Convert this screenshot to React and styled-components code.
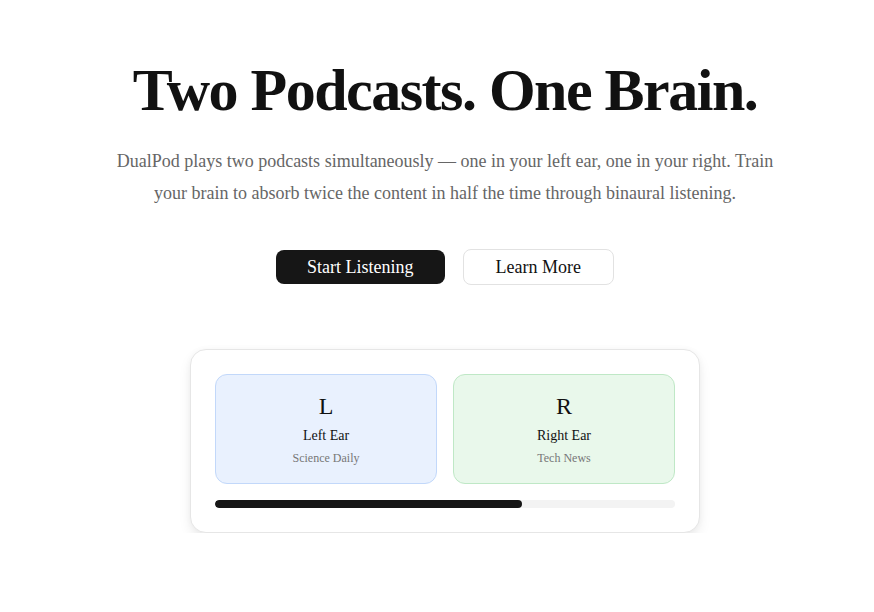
import React from 'react';
import styled, { createGlobalStyle } from 'styled-components';

const GlobalStyle = createGlobalStyle`
  * { box-sizing: border-box; }
  body {
    margin: 0;
    background: #fff;
    font-family: "Liberation Serif", "Times New Roman", serif;
    color: #111;
  }
`;

const Hero = styled.section`
  display: flex;
  flex-direction: column;
  align-items: center;
  padding: 60px 8px 0 24px;
  text-align: center;
`;

const Title = styled.h1`
  margin: 0;
  font-size: 60px;
  font-weight: 700;
  line-height: 1;
  letter-spacing: -0.025em;
  color: #111;
`;

const Lead = styled.p`
  margin: 25px 0 0;
  max-width: 680px;
  font-size: 18px;
  line-height: 32px;
  color: #666;
`;

const Actions = styled.div`
  display: flex;
  align-items: center;
  gap: 18px;
  margin-top: 40px;
`;

const Button = styled.button`
  font-family: inherit;
  font-size: 18px;
  line-height: 20px;
  padding: 7px 32px;
  border-radius: 8px;
  cursor: pointer;
  border: 1px solid #e2e2e2;
  background: #fff;
  color: #111;
`;

const PrimaryButton = styled(Button)`
  padding: 7px 31px;
  border: 0;
  background: #161616;
  color: #fff;
`;

const Card = styled.div`
  margin-top: 64px;
  width: 510px;
  padding: 24px;
  background: #fff;
  border: 1px solid #e6e6e6;
  border-radius: 16px;
  box-shadow: 0 6px 14px -2px rgba(0, 0, 0, 0.1), 0 0 6px rgba(0, 0, 0, 0.03);
`;

const Ears = styled.div`
  display: grid;
  grid-template-columns: 1fr 1fr;
  gap: 16px;
`;

const Ear = styled.div`
  height: 110px;
  display: flex;
  flex-direction: column;
  align-items: center;
  justify-content: center;
  border-radius: 12px;
  background: ${p => p.$bg};
  border: 1px solid ${p => p.$border};
`;

const Letter = styled.div`
  font-size: 24px;
  line-height: 28px;
  color: #111;
`;

const EarName = styled.div`
  margin-top: 7px;
  font-size: 14px;
  line-height: 18px;
  color: #111;
`;

const Show = styled.div`
  margin-top: 5px;
  font-size: 12px;
  line-height: 16px;
  color: #777;
`;

const Track = styled.div`
  margin-top: 16px;
  height: 8px;
  border-radius: 4px;
  background: #f3f3f3;
  overflow: hidden;
`;

const Fill = styled.div`
  height: 100%;
  border-radius: 4px;
  background: #161616;
`;

export default function App() {
  const progress = 66.7;
  return (
    <>
      <GlobalStyle />
      <Hero>
        <Title>Two Podcasts. One Brain.</Title>
        <Lead>
          DualPod plays two podcasts simultaneously — one in your left ear, one in your right. Train
          your brain to absorb twice the content in half the time through binaural listening.
        </Lead>
        <Actions>
          <PrimaryButton>Start Listening</PrimaryButton>
          <Button>Learn More</Button>
        </Actions>
        <Card>
          <Ears>
            <Ear $bg="#e9f1fe" $border="#c2d8fa">
              <Letter>L</Letter>
              <EarName>Left Ear</EarName>
              <Show>Science Daily</Show>
            </Ear>
            <Ear $bg="#e9f8eb" $border="#bfe8c6">
              <Letter>R</Letter>
              <EarName>Right Ear</EarName>
              <Show>Tech News</Show>
            </Ear>
          </Ears>
          <Track>
            <Fill style={{ width: `${progress}%` }} />
          </Track>
        </Card>
      </Hero>
    </>
  );
}
